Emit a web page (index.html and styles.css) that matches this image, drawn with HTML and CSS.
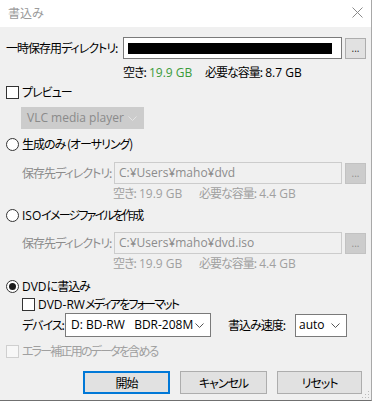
FILE: index.html
```html
<!DOCTYPE html>
<html lang="ja">
<head>
<meta charset="utf-8">
<title>書込み</title>
<link rel="stylesheet" href="styles.css">
</head>
<body>
<div class="win">
  <div class="titlebar">
    <span class="title ja">書込み</span>
    <svg class="close" width="11" height="11" viewBox="0 0 11 11"><path d="M0.5 0.5L10.5 10.5M10.5 0.5L0.5 10.5" stroke="#8a8a8a" stroke-width="1" fill="none"/></svg>
  </div>
  <div class="content">
    <div class="row r-tmp">
      <span class="lbl lbl-tmp ja">一時保存用ディレクトリ:</span>
      <div class="field field-tmp"><span class="redact"></span></div>
      <div class="dots">...</div>
    </div>
    <div class="row free free1">
      <span class="free-a fa1"><span class="ja">空き:</span> <span class="green">19.9 GB</span></span>
      <span><span class="ja">必要な容量:</span> 8.7 GB</span>
    </div>
    <div class="row check r-preview">
      <span class="cb"></span><span class="ctext ja">プレビュー</span>
    </div>
    <div class="row r-vlc">
      <div class="select sel-vlc"><span class="sel-text">VLC media player</span>
        <svg class="chev" width="9" height="5" viewBox="0 0 9 5"><path d="M0.5 0.5L4.5 4.5L8.5 0.5" stroke="#e4e4e4" fill="none"/></svg>
      </div>
    </div>
    <div class="row check r-radio1">
      <span class="rb"></span><span class="ctext ja">生成のみ (オーサリング)</span>
    </div>
    <div class="row r-dir2">
      <span class="lbl lbl-save ja">保存先ディレクトリ:</span>
      <div class="field field-save dis">C:¥Users¥maho¥dvd</div>
      <div class="dots dis">...</div>
    </div>
    <div class="row free free-dis free2">
      <span class="free-a fa2"><span class="ja">空き:</span> 19.9 GB</span>
      <span><span class="ja">必要な容量:</span> 4.4 GB</span>
    </div>
    <div class="row check r-radio2">
      <span class="rb"></span><span class="ctext">ISO<span class="ja tight">イメージファイルを作成</span></span>
    </div>
    <div class="row r-dir3">
      <span class="lbl lbl-save ja">保存先ディレクトリ:</span>
      <div class="field field-save dis">C:¥Users¥maho¥dvd.iso</div>
      <div class="dots dis">...</div>
    </div>
    <div class="row free free-dis free3">
      <span class="free-a fa2"><span class="ja">空き:</span> 19.9 GB</span>
      <span><span class="ja">必要な容量:</span> 4.4 GB</span>
    </div>
    <div class="row check r-radio3">
      <span class="rb on"></span><span class="ctext">DVD<span class="ja">に書込み</span></span>
    </div>
    <div class="row check r-dvdrw">
      <span class="cb"></span><span class="ctext">DVD-RW<span class="ja tight">メディアをフォーマット</span></span>
    </div>
    <div class="row r-device">
      <span class="lbl lbl-dev ja">デバイス:</span>
      <div class="select sel-dev"><span class="sel-text">D: BD-RW&nbsp;&nbsp;&nbsp;BDR-208M</span>
        <svg class="chev" width="9" height="5" viewBox="0 0 9 5"><path d="M0.5 0.5L4.5 4.5L8.5 0.5" stroke="#555" fill="none"/></svg>
      </div>
      <span class="lbl lbl-speed ja">書込み速度:</span>
      <div class="select sel-speed"><span class="sel-text">auto</span>
        <svg class="chev" width="9" height="5" viewBox="0 0 9 5"><path d="M0.5 0.5L4.5 4.5L8.5 0.5" stroke="#555" fill="none"/></svg>
      </div>
    </div>
    <div class="row check r-error">
      <span class="cb cb-dis"></span><span class="ctext dis-text ja tight">エラー補正用のデータを含める</span>
    </div>
    <div class="row r-buttons">
      <div class="btn btn-default"><span class="ja">開始</span></div>
      <div class="btn btn-cancel"><span class="ja">キャンセル</span></div>
      <div class="btn btn-reset"><span class="ja">リセット</span></div>
    </div>
  </div>
  <svg class="grip" width="8" height="8" viewBox="0 0 8 8">
    <rect x="6" y="0" width="1" height="1" fill="#bbb"/>
    <rect x="3" y="3" width="1" height="1" fill="#bbb"/>
    <rect x="6" y="3" width="1" height="1" fill="#bbb"/>
    <rect x="0" y="6" width="1" height="1" fill="#bbb"/>
    <rect x="3" y="6" width="1" height="1" fill="#bbb"/>
    <rect x="6" y="6" width="1" height="1" fill="#bbb"/>
  </svg>
</div>
</body>
</html>
```

FILE: styles.css
```css
html, body {
  margin: 0;
  padding: 0;
  background: #ffffff;
}
body {
  font-family: "Open Sans", "Noto Sans CJK JP", sans-serif;
  font-size: 12px;
  color: #000;
}
.ja {
  font-family: "Noto Sans CJK JP", sans-serif;
  font-feature-settings: "palt" 1;
  letter-spacing: -1px;
}
.ja.tight {
  letter-spacing: -1.8px;
}
.win {
  position: relative;
  width: 371px;
  height: 400px;
  border-right: 1px solid #a8a8a8;
  border-bottom: 1px solid #707070;
  background: #f0f0f0;
  overflow: hidden;
}
.titlebar {
  height: 27px;
  background: #ffffff;
  display: flex;
  align-items: center;
  justify-content: space-between;
  padding: 0 8px 0 8px;
  box-sizing: border-box;
}
.title {
  color: #9a9a9a;
  line-height: 14px;
  margin-top: -1px;
  letter-spacing: 0;
}
.close {
  margin-top: -3px;
}
.content {
  padding: 10px 0 0 6px;
  display: flex;
  flex-direction: column;
}
.row {
  display: flex;
  align-items: center;
  line-height: 16px;
  white-space: nowrap;
}
.lbl { flex: none; }
.lbl-tmp { width: 117px; }
.lbl-save { width: 92px; color: #8c8c8c; }
.field {
  box-sizing: border-box;
  height: 22px;
  border: 1px solid #7a7a7a;
  background: #fff;
  display: flex;
  align-items: center;
  flex: none;
}
.field-tmp { width: 219px; padding-left: 4px; }
.redact {
  display: block;
  width: 204px;
  height: 11px;
  background: #000;
}
.field-save {
  width: 228px;
  padding-left: 4px;
}
.field.dis {
  background: #f0f0f0;
  border-color: #cccccc;
  color: #8c8c8c;
}
.dots {
  box-sizing: border-box;
  width: 21px;
  height: 21px;
  margin-left: 3px;
  background: #e1e1e1;
  border: 1px solid #adadad;
  display: flex;
  justify-content: center;
  align-items: center;
  font-size: 10px;
  line-height: 10px;
  color: #222;
  flex: none;
}
.dots.dis {
  background: #cccccc;
  border-color: #c2c2c2;
  color: #8c8c8c;
}
.r-tmp { height: 22px; }
.free1 { margin-top: 2px; height: 22px; padding-left: 117px; }
.free2, .free3 { height: 18px; padding-left: 107px; }
.fa1 { width: 82px; flex: none; }
.fa2 { width: 86px; flex: none; }
.green { color: #3a9b3a; }
.free-dis { color: #a0a0a0; }
.check { height: 18px; }
.cb {
  box-sizing: border-box;
  width: 13px;
  height: 13px;
  border: 1px solid #333;
  background: #fff;
  flex: none;
}
.cb-dis {
  border-color: #cfcfcf;
  background: #f7f7f7;
}
.rb {
  box-sizing: border-box;
  width: 13px;
  height: 13px;
  border: 1px solid #333;
  border-radius: 50%;
  background: #fff;
  flex: none;
  display: flex;
  justify-content: center;
  align-items: center;
}
.rb.on::after {
  content: "";
  width: 7px;
  height: 7px;
  border-radius: 50%;
  background: #1a1a1a;
}
.ctext { margin-left: 3px; }
.dis-text { color: #a0a0a0; }
.r-vlc { margin-top: 6px; height: 22px; padding-left: 15px; }
.select {
  box-sizing: border-box;
  height: 22px;
  display: flex;
  align-items: center;
  justify-content: space-between;
  padding: 0 6px 0 5px;
  flex: none;
}
.sel-vlc {
  width: 123px;
  background: #cccccc;
  border: 1px solid #cccccc;
  color: #8a8a8a;
}
.r-radio1 { margin-top: 6px; }
.r-dir2 { margin-top: 9px; height: 22px; padding-left: 16px; }
.r-radio2 { margin-top: 4px; }
.r-dir3 { margin-top: 8px; height: 22px; padding-left: 16px; }
.r-radio3 { margin-top: 5px; }
.r-dvdrw { padding-left: 16px; }
.r-device { height: 24px; padding-left: 16px; }
.lbl-dev { width: 43px; }
.sel-dev {
  width: 146px;
  height: 24px;
  background: #fff;
  border: 1px solid #7a7a7a;
}
.lbl-speed { margin-left: 17px; width: 67px; }
.sel-speed {
  width: 52px;
  height: 23px;
  background: #fff;
  border: 1px solid #7a7a7a;
  padding-left: 3px;
}
.r-error { margin-top: 5px; }
.r-buttons { margin-top: 11px; height: 23px; padding-left: 77px; }
.btn {
  box-sizing: border-box;
  height: 23px;
  background: #e1e1e1;
  border: 1px solid #adadad;
  display: flex;
  justify-content: center;
  align-items: center;
  flex: none;
}
.btn-default {
  width: 87px;
  border: 2px solid #0078d7;
}
.btn-cancel { width: 87px; margin-left: 10px; }
.btn-reset { width: 85px; margin-left: 10px; }
.grip {
  position: absolute;
  right: 1px;
  bottom: 1px;
}
```
